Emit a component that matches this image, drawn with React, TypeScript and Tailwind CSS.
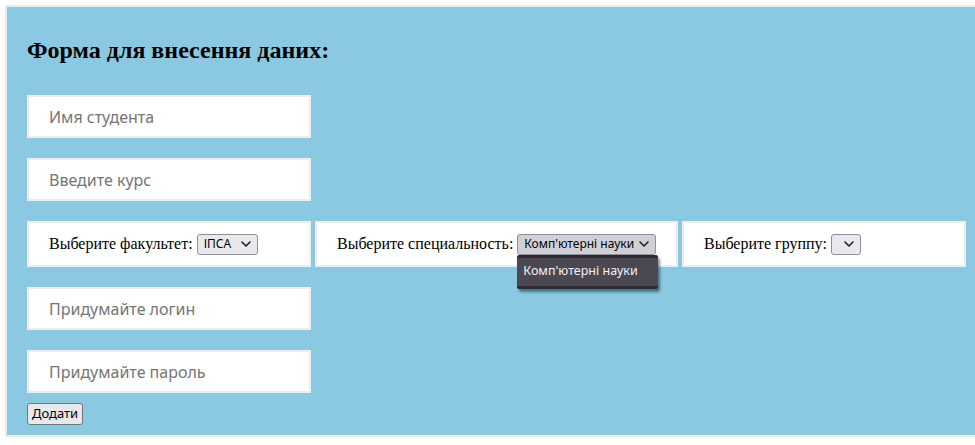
import React from "react";

function Chevron() {
  return (
    <svg width="10" height="6" viewBox="0 0 10 6" fill="none" className="shrink-0">
      <path d="M1 1l4 4 4-4" stroke="#1f1f1f" strokeWidth="1.6" strokeLinecap="round" strokeLinejoin="round" />
    </svg>
  );
}

function TextBox({ placeholder }: { placeholder: string }) {
  return (
    <div
      className="flex h-[43px] w-[284px] items-center border-2 border-[#ededed] bg-white pl-[20px] text-[16px] text-[#757575]"
      style={{ fontFamily: '"Noto Sans", sans-serif' }}
    >
      {placeholder}
    </div>
  );
}

function Select({ value, width, active }: { value: string; width: string; active?: boolean }) {
  return (
    <span
      className={
        "ml-[4px] inline-flex h-[21px] items-center justify-between gap-[4px] whitespace-nowrap rounded-[3px] border border-[#8f8f9d] pl-[6px] pr-[6px] text-[12px] text-black " +
        width +
        (active ? " bg-[#d0d0d7]" : " bg-[#e9e9ed]")
      }
      style={{ fontFamily: '"Noto Sans", sans-serif' }}
    >
      <span className="leading-none">{value}</span>
      <Chevron />
    </span>
  );
}

export default function App() {
  const serif = { fontFamily: '"Liberation Serif", "Times New Roman", serif' };
  return (
    <div className="h-[445px] w-[975px] bg-white pl-[5px] pt-[5px]">
      <div className="h-[432px] border-2 border-r-0 border-[#ececec] bg-[#8bc8e2] pl-[20px] pt-[30px]" style={serif}>
        <h2 className="text-[24px] font-bold leading-[27px] text-black">Форма для внесення даних:</h2>

        <div className="mt-[31px] flex flex-col gap-[20px]">
          <TextBox placeholder="Имя студента" />
          <TextBox placeholder="Введите курс" />

          <div className="flex gap-[4px] whitespace-nowrap text-[16px] text-black">
            <div className="flex h-[46px] w-[284px] items-center border-2 border-[#ededed] bg-white pl-[20px]">
              Выберите факультет:
              <Select value="ІПСА" width="w-[61px]" />
            </div>
            <div className="flex h-[46px] w-[363px] items-center border-2 border-[#ededed] bg-white pl-[20px]">
              Выберите специальность:
              <span className="relative flex">
                <Select value="Комп'ютерні науки" width="w-[139px]" active />
                <div
                  className="absolute left-[4px] top-[21px] z-10 flex h-[34px] w-[141px] items-center rounded-[2px] border-y-[3px] border-[#2d2b31] bg-[#4b4853] pl-[6px] text-[12.5px] text-[#f2f2f5] shadow-[2px_3px_3px_rgba(0,0,0,0.45)]"
                  style={{ fontFamily: '"Noto Sans", sans-serif' }}
                >
                  Комп'ютерні науки
                </div>
              </span>
            </div>
            <div className="flex h-[46px] w-[284px] items-center border-2 border-[#ededed] bg-white pl-[20px]">
              Выберите группу:
              <Select value="" width="w-[30px]" />
            </div>
          </div>

          <TextBox placeholder="Придумайте логин" />
          <TextBox placeholder="Придумайте пароль" />
        </div>

        <button
          className="mt-[10px] flex h-[22px] items-center rounded-[3px] border border-[#767676] bg-[#e9e9ed] px-[4px] text-[13px] text-black"
          style={{ fontFamily: '"Noto Sans", sans-serif' }}
        >
          Додати
        </button>
      </div>
    </div>
  );
}
